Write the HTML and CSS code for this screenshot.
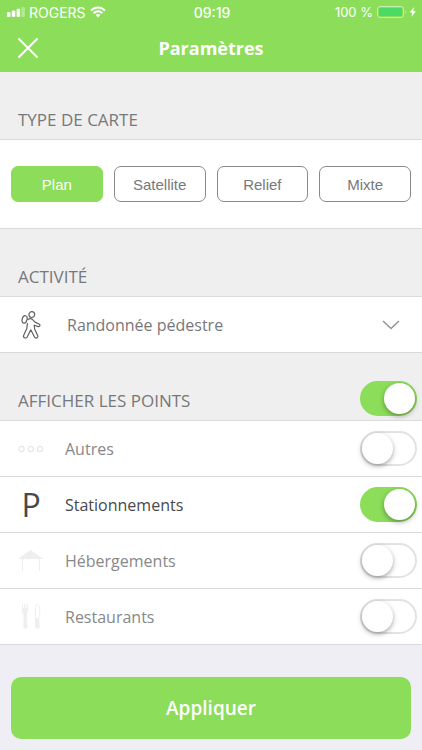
FILE: index.html
```html
<!DOCTYPE html>
<html lang="fr">
<head>
    <meta charset="UTF-8" />
    <title>Paramètres</title>
    <meta name="viewport" content="width=device-width, initial-scale=1" />
    <link rel="stylesheet" href="styles.css">
</head>
<body>
    <header class="topbar">
        <div class="status">
            <div class="status-left">
                <svg width="18" height="10" viewBox="0 0 18 10" fill="#fff" aria-hidden="true">
                    <rect x="0" y="5" width="3.5" height="5" rx="1" />
                    <rect x="4.8" y="3.5" width="3.5" height="6.5" rx="1" />
                    <rect x="9.6" y="1.8" width="3.5" height="8.2" rx="1" />
                    <rect x="14.4" y="0" width="3.5" height="10" rx="1" opacity="0.35" />
                </svg>
                <span>ROGERS</span>
                <svg class="wifi" width="16" height="12" viewBox="0 0 16 12" fill="none" stroke="#fff" stroke-width="2" aria-hidden="true">
                    <path d="M1 4.6C5 .4 11 .4 15 4.6" />
                    <path d="M3.6 7.2C6.2 4.7 9.8 4.7 12.4 7.2" />
                    <path d="M8 11.4L5.6 9C7 7.7 9 7.7 10.4 9z" fill="#fff" stroke="none" />
                </svg>
            </div>
            <span class="status-time">09:19</span>
            <div class="status-right">
                <span>100 %</span>
                <svg width="40" height="14" viewBox="0 0 40 14" aria-hidden="true">
                    <rect x="0.5" y="1.5" width="26" height="11" rx="2.5" fill="none" stroke="#c6efae" />
                    <rect x="2" y="3" width="23" height="8" rx="1" fill="#4cd964" />
                    <path d="M28 5.3c1.2.6 1.2 2.8 0 3.4z" fill="#c6efae" />
                    <path d="M37 2l-4.2 5.6h2.5L34.4 12l4.4-5.8h-2.6z" fill="#fff" />
                </svg>
            </div>
        </div>
        <div class="titlebar">
            <button class="close" type="button" aria-label="Fermer">
                <svg width="20" height="20" viewBox="0 0 20 20" fill="none" stroke="#fff" stroke-width="2" stroke-linecap="round">
                    <path d="M1 1l18 18M19 1L1 19" />
                </svg>
            </button>
            <h1>Paramètres</h1>
        </div>
    </header>

    <main>
        <div class="section-head">
            <h2>TYPE DE CARTE</h2>
        </div>
        <div class="map-types">
            <button class="map-type active" type="button">Plan</button>
            <button class="map-type" type="button">Satellite</button>
            <button class="map-type" type="button">Relief</button>
            <button class="map-type" type="button">Mixte</button>
        </div>

        <div class="section-head">
            <h2><label for="activite">ACTIVITÉ</label></h2>
        </div>
        <div class="row activity">
            <span class="icon">
                <svg width="20" height="28" viewBox="0 0 20 28" fill="none" stroke="#606164" stroke-width="1.2" stroke-linejoin="round" stroke-linecap="round" aria-hidden="true">
                    <circle cx="10.8" cy="3.6" r="2.9" />
                    <ellipse cx="3.6" cy="8.4" rx="2.4" ry="3.8" transform="rotate(15 3.6 8.4)" />
                    <path d="M6.8 8.4C8.2 7.6 10.400 7.600 11.800 8.800L14.400 11.400L18 13C19.600 13.800 19 15.900 17.400 15.600L13.200 14.200L13.600 18L16.800 24.800C17.400 26.800 14.800 27.900 13.600 26.200L9.800 18.800L6.200 26C5 27.900 1.900 26.700 2.600 24.600L5.800 17.600L6.400 12.600" />
                </svg>
            </span>
            <select id="activite">
                <option>Randonnée pédestre</option>
            </select>
            <svg class="chevron" width="18" height="10" viewBox="0 0 18 10" fill="none" stroke="#939496" stroke-width="1.5" aria-hidden="true">
                <path d="M1 1l8 7.5L17 1" />
            </svg>
        </div>

        <div class="section-head">
            <h2><label for="points">AFFICHER LES POINTS</label></h2>
            <input class="switch" type="checkbox" id="points" checked>
        </div>
        <div class="row">
            <span class="icon">
                <svg width="26" height="8" viewBox="0 0 26 8" fill="none" stroke="#e6e6e6" stroke-width="1.2" aria-hidden="true">
                    <circle cx="3.5" cy="4" r="2.6" />
                    <circle cx="12.8" cy="4" r="2.6" />
                    <circle cx="22" cy="4" r="2.6" />
                </svg>
            </span>
            <label for="autres">Autres</label>
            <input class="switch" type="checkbox" id="autres">
        </div>
        <div class="row selected">
            <span class="icon parking" aria-hidden="true">P</span>
            <label for="stationnements">Stationnements</label>
            <input class="switch" type="checkbox" id="stationnements" checked>
        </div>
        <div class="row">
            <span class="icon">
                <svg width="26" height="22" viewBox="0 0 26 22" fill="#eee" aria-hidden="true">
                    <path d="M12.5 0L25.5 9H0z" />
                    <path d="M4 9h1v12H4zM21 9h1v12h-1z" />
                </svg>
            </span>
            <label for="hebergements">Hébergements</label>
            <input class="switch" type="checkbox" id="hebergements">
        </div>
        <div class="row">
            <span class="icon">
                <svg width="20" height="25" viewBox="0 0 20 25" fill="#efefef" aria-hidden="true">
                    <path d="M1 0h1v4h1.2V0h1.4v4h1.200V0H7v7.500c0 1-.5 1.500-1.200 2L6.400 23c0 2.400-4 2.400-4 0L2.400 9.500C1.500 9 1 8.500 1 7.500z" />
                    <path d="M14.500 14.500V3.500C14.500 1 15.500.5 16.500.5c1.500 0 2.300 4 2.300 7.500 0 3-.6 4.500-1.200 6.500z" fill="none" stroke="#efefef" />
                    <path d="M14 14h4l.8 9c0 2.400-4.800 2.400-4.800 0z" />
                </svg>
            </span>
            <label for="restaurants">Restaurants</label>
            <input class="switch" type="checkbox" id="restaurants">
        </div>
    </main>

    <footer>
        <button class="apply" type="button">Appliquer</button>
    </footer>
</body>
</html>
```
FILE: styles.css
```css
* {
    box-sizing: border-box;
}

body {
    margin: 0;
    font-family: "Open Sans", "Noto Sans", sans-serif;
    font-size: 16px;
    background-color: #efeef4;
    color: #87888a;
}

button,
select {
    font: inherit;
    color: inherit;
    border: none;
    background: none;
    padding: 0;
    margin: 0;
}

/* top bar */
.topbar {
    background-color: #8cdd5a;
    color: white;
}

.status {
    display: grid;
    grid-template-columns: 1fr auto 1fr;
    align-items: center;
    height: 24px;
    padding: 0 5px 0 7px;
    font-family: Inter, sans-serif;
    font-size: 13px;
}

.status-left,
.status-right {
    display: flex;
    align-items: center;
    gap: 4px;
}

.status-left,
.status-time {
    font-size: 14px;
}

.status-right {
    justify-content: flex-end;
}

.status-time {
    font-weight: 500;
}

.titlebar {
    display: grid;
    grid-template-columns: 20px 1fr 20px;
    align-items: center;
    height: 48px;
    padding: 0 18px;
}

.close {
    display: flex;
}

.titlebar h1 {
    margin: 0;
    font-size: 18px;
    font-weight: 700;
    text-align: center;
}

/* sections */
.section-head {
    display: flex;
    align-items: flex-end;
    justify-content: space-between;
    height: 68px;
    padding: 0 5px 4px 18px;
    background-color: #efefef;
    border-bottom: 1px solid #d9dadd;
}

    .section-head h2 {
        margin: 0;
        padding-bottom: 3px;
        font-size: 17px;
        line-height: 24px;
        font-weight: 400;
        color: #77787b;
    }

.map-types {
    display: grid;
    grid-template-columns: repeat(4, 1fr);
    gap: 11px;
    padding: 26px 11px;
    background-color: white;
    border-bottom: 1px solid #d9dadd;
}

.map-type {
    height: 36px;
    border: 1px solid #88898b;
    border-radius: 7px;
    font-family: "Liberation Sans", Arial, sans-serif;
    font-size: 15px;
    color: #77787b;
}

    .map-type.active {
        background-color: #8cdd5a;
        border-color: #8cdd5a;
        color: white;
    }

.row {
    display: flex;
    align-items: center;
    height: 56px;
    padding: 0 5px 0 18px;
    background-color: white;
    border-bottom: 1px solid #d9dadd;
}

    .row label {
        flex: 1;
    }

    .row.selected {
        color: #48494b;
    }

.icon {
    display: flex;
    align-items: center;
    justify-content: center;
    width: 26px;
    margin-right: 21px;
}

.parking {
    font-size: 32px;
    line-height: 32px;
    font-weight: 400;
}

.activity {
    position: relative;
    color: #77787b;
}

    .activity select {
        flex: 1;
        height: 100%;
        padding-left: 2px;
        appearance: none;
    }

/* arrow drawn over the select */
.chevron {
    position: absolute;
    right: 22px;
    pointer-events: none;
}

/* switches */
.switch {
    appearance: none;
    display: flex;
    width: 57px;
    height: 35px;
    margin: 0;
    padding: 0;
    border: 2px solid #e2e2e2;
    border-radius: 18px;
    background-color: white;
}

    .switch::before {
        content: "";
        width: 31px;
        height: 31px;
        border-radius: 50%;
        background-color: white;
        box-shadow: 0 2px 5px rgba(0, 0, 0, 0.35);
    }

    .switch:checked {
        justify-content: flex-end;
        background-color: #8cdd5a;
        border-color: #8cdd5a;
    }

footer {
    padding: 32px 11px 11px;
}

.apply {
    width: 100%;
    height: 62px;
    border-radius: 10px;
    background-color: #8cdd5a;
    color: white;
    font-size: 19px;
    font-weight: 600;
}
```
